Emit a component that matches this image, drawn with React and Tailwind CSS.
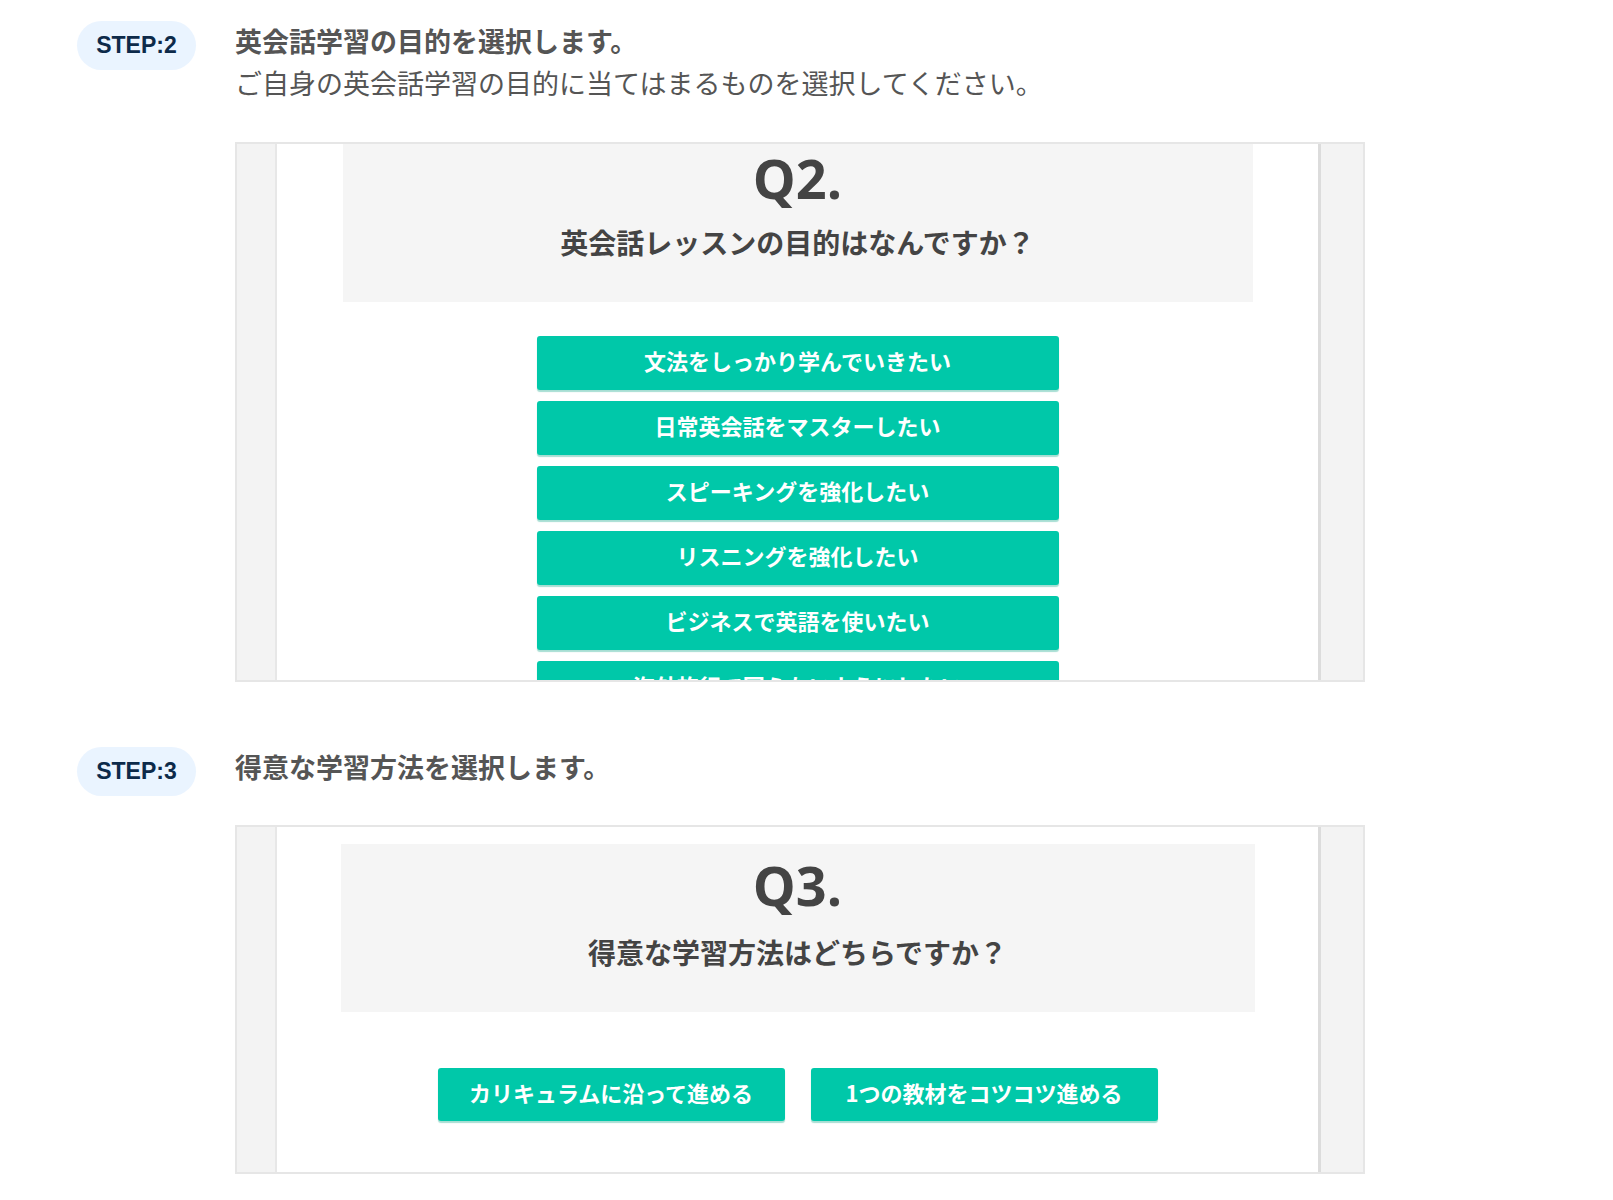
import React from "react";

const jp = { fontFamily: '"Noto Sans CJK JP", "Noto Sans", sans-serif' };
const q = { fontFamily: '"Open Sans", "Noto Sans", sans-serif' };

function Badge({ n }) {
  return (
    <div
      className="w-[119px] h-[49px] shrink-0 rounded-full bg-[#eaf4ff] flex items-center justify-center text-[23px] font-bold text-[#0d2a4a]"
      style={{ fontFamily: '"Liberation Sans", Arial, sans-serif' }}
    >
      STEP:{n}
    </div>
  );
}

function Btn({ children, className = "" }) {
  return (
    <div
      className={
        "bg-[#00c8a9] rounded-[3px] shadow-[0_2px_1px_rgba(0,160,130,0.35)] flex items-center justify-center text-white text-[22px] leading-[30px] font-bold pb-[6px] " +
        className
      }
      style={jp}
    >
      {children}
    </div>
  );
}

function Frame({ height, children }) {
  return (
    <div
      className="w-[1130px] border-2 border-[#e6e6e6] bg-[#f3f3f3] flex overflow-hidden"
      style={{ height }}
    >
      <div className="w-[40px] shrink-0 border-r-2 border-[#e7e7e7]" />
      <div className="flex-1 bg-white border-r-[3px] border-[#dcdcdc] flex flex-col items-center overflow-hidden">
        {children}
      </div>
      <div className="w-[42px] shrink-0" />
    </div>
  );
}

export default function App() {
  const opts = [
    "文法をしっかり学んでいきたい",
    "日常英会話をマスターしたい",
    "スピーキングを強化したい",
    "リスニングを強化したい",
    "ビジネスで英語を使いたい",
    "海外旅行で困らないようにしたい",
  ];
  return (
    <div className="w-[1613px] h-[1200px] bg-white pl-[77px] pt-[20px]" style={jp}>
      {/* STEP 2 */}
      <div className="flex items-start gap-[39px]">
        <div className="mt-[1px]">
          <Badge n={2} />
        </div>
        <div className="flex flex-col">
          <div className="text-[27px] leading-[42px] font-bold text-[#555555]">
            英会話学習の目的を選択します。
          </div>
          <div className="text-[27px] leading-[42px] text-[#555555]">
            ご自身の英会話学習の目的に当てはまるものを選択してください。
          </div>
          <div className="mt-[38px]">
            <Frame height={540}>
              <div className="w-[910px] h-[158px] bg-[#f5f5f5] flex flex-col items-center shrink-0">
                <div className="text-[54px] leading-[60px] font-bold text-[#444444] mt-[4px]" style={q}>
                  Q2.
                </div>
                <div className="text-[28px] leading-[40px] font-bold text-[#444444] mt-[14px]">
                  英会話レッスンの目的はなんですか？
                </div>
              </div>
              <div className="flex flex-col gap-[11px] mt-[34px]">
                {opts.map((o) => (
                  <Btn key={o} className="w-[522px] h-[54px] shrink-0">
                    {o}
                  </Btn>
                ))}
              </div>
            </Frame>
          </div>
        </div>
      </div>

      {/* STEP 3 */}
      <div className="flex items-start gap-[39px] mt-[64px]">
        <div className="mt-[1px]">
          <Badge n={3} />
        </div>
        <div className="flex flex-col">
          <div className="text-[27px] leading-[42px] font-bold text-[#555555]">
            得意な学習方法を選択します。
          </div>
          <div className="mt-[37px]">
            <Frame height={349}>
              <div className="w-[914px] h-[168px] bg-[#f5f5f5] flex flex-col items-center shrink-0 mt-[17px]">
                <div className="text-[54px] leading-[60px] font-bold text-[#444444] mt-[11px]" style={q}>
                  Q3.
                </div>
                <div className="text-[28px] leading-[40px] font-bold text-[#444444] mt-[17px]">
                  得意な学習方法はどちらですか？
                </div>
              </div>
              <div className="flex gap-[26px] mt-[56px]">
                <Btn className="w-[347px] h-[53px]">カリキュラムに沿って進める</Btn>
                <Btn className="w-[347px] h-[53px]">1つの教材をコツコツ進める</Btn>
              </div>
            </Frame>
          </div>
        </div>
      </div>
    </div>
  );
}
